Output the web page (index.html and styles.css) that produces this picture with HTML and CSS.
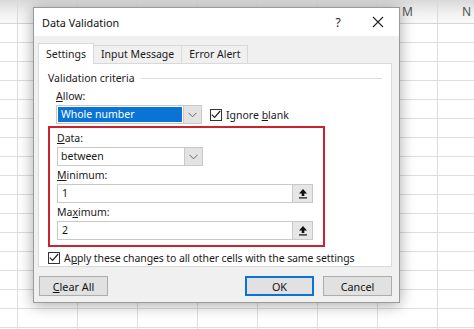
FILE: index.html
```html
<!DOCTYPE html>
<html lang="en">
  <head>
    <meta charset="UTF-8" />
    <meta name="viewport" content="width=device-width, initial-scale=1.0" />
    <title>Data Validation</title>
    <link rel="stylesheet" href="styles.css">
  </head>
  <body>
    <div class="sheet">
      <div class="col-headers">
        <div class="col-head row-head"></div>
        <div class="col-head"></div>
        <div class="col-head"></div>
        <div class="col-head"></div>
        <div class="col-head"></div>
        <div class="col-head"></div>
        <div class="col-head"></div>
        <div class="col-head">M</div>
        <div class="col-head">N</div>
      </div>
      <div class="cells"></div>
    </div>

    <div class="dialog">
      <div class="titlebar">
        <span class="title">Data Validation</span>
        <span class="help">?</span>
        <span class="close">
          <svg width="12" height="12" viewBox="0 0 12 12">
            <path d="M1 1 L11 11 M11 1 L1 11" stroke="#222" stroke-width="1.1" fill="none" />
          </svg>
        </span>
      </div>

      <div class="dialog-body">
        <div class="tabs">
          <div class="tab active">Settings</div>
          <div class="tab">Input Message</div>
          <div class="tab">Error Alert</div>
        </div>

        <div class="panel">
          <div class="group-title">
            <span>Validation criteria</span>
            <span class="group-line"></span>
          </div>

          <div class="field-label allow-label"><u>A</u>llow:</div>
          <div class="allow-row">
            <div class="select">
              <div class="select-value selected">Whole number</div>
              <div class="select-btn">
                <svg width="9" height="6" viewBox="0 0 9 6">
                  <path d="M0.5 0.8 L4.5 4.8 L8.5 0.8" stroke="#666" stroke-width="1" fill="none" />
                </svg>
              </div>
            </div>
            <label class="check">
              <span class="box">
                <svg width="10" height="9" viewBox="0 0 10 9">
                  <path d="M0.8 4.6 L3.6 7.4 L9.2 1" stroke="#222" stroke-width="1.2" fill="none" />
                </svg>
              </span>
              <span class="check-text">Ignore <u>b</u>lank</span>
            </label>
          </div>

          <div class="highlight">
            <div class="field-label"><u>D</u>ata:</div>
            <div class="select">
              <div class="select-value">between</div>
              <div class="select-btn">
                <svg width="9" height="6" viewBox="0 0 9 6">
                  <path d="M0.5 0.8 L4.5 4.8 L8.5 0.8" stroke="#666" stroke-width="1" fill="none" />
                </svg>
              </div>
            </div>

            <div class="field-label"><u>M</u>inimum:</div>
            <div class="input">
              <div class="input-value">1</div>
              <div class="ref-btn">
                <svg width="10" height="11" viewBox="0 0 10 11">
                  <path d="M5 1 L9 5.5 L6.3 5.5 L6.3 8 L3.7 8 L3.7 5.5 L1 5.5 Z" fill="#111" />
                  <rect x="1" y="9.3" width="8" height="1.2" fill="#111" />
                </svg>
              </div>
            </div>

            <div class="field-label">Ma<u>x</u>imum:</div>
            <div class="input">
              <div class="input-value">2</div>
              <div class="ref-btn">
                <svg width="10" height="11" viewBox="0 0 10 11">
                  <path d="M5 1 L9 5.5 L6.3 5.5 L6.3 8 L3.7 8 L3.7 5.5 L1 5.5 Z" fill="#111" />
                  <rect x="1" y="9.3" width="8" height="1.2" fill="#111" />
                </svg>
              </div>
            </div>
          </div>

          <label class="check apply">
            <span class="box">
              <svg width="10" height="9" viewBox="0 0 10 9">
                <path d="M0.8 4.6 L3.6 7.4 L9.2 1" stroke="#222" stroke-width="1.2" fill="none" />
              </svg>
            </span>
            <span class="check-text">A<u>p</u>ply these changes to all other cells with the same settings</span>
          </label>
        </div>

        <div class="buttons">
          <button class="btn"><u>C</u>lear All</button>
          <div class="spacer"></div>
          <button class="btn default">OK</button>
          <button class="btn">Cancel</button>
        </div>
      </div>
    </div>
  </body>
</html>
```

FILE: styles.css
```css
body {
  margin: 0;
  width: 474px;
  height: 329px;
  overflow: hidden;
  position: relative;
  font-family: "Noto Sans", "Open Sans", sans-serif;
  font-size: 10.5px;
  color: #1a1a1a;
  background-color: #fff;
}

.sheet {
  height: 329px;
  display: flex;
  flex-direction: column;
}

.col-headers {
  display: flex;
  height: 24px;
  overflow: hidden;
  border-bottom: 1px solid #d4d4d4;
  background: linear-gradient(#d9d9d9, #f2f2f2 14px, #fafafa);
  box-sizing: border-box;
}

.col-head {
  flex: 0 0 60px;
  border-right: 1px solid #dadada;
  box-sizing: border-box;
  text-align: center;
  line-height: 24px;
  font-size: 12px;
  color: #555;
}

.col-head.row-head {
  flex-basis: 18px;
}

.col-head:last-child {
  flex-basis: 37px;
  text-align: left;
  padding-left: 24px;
  border-right: none;
}

.cells {
  flex: 1;
  background-image:
    linear-gradient(to right, #dedede 1px, transparent 1px),
    linear-gradient(to bottom, #dedede 1px, transparent 1px);
  background-size: 60px 19px;
  background-position: 17px 18px;
}

/* dialog */
.dialog {
  position: absolute;
  left: 33px;
  top: 7px;
  width: 367px;
  height: 296px;
  box-sizing: border-box;
  border: 1px solid #9a9a9a;
  background-color: #f0f0f0;
  box-shadow: 0 2px 14px rgba(0, 0, 0, 0.35);
  display: flex;
  flex-direction: column;
}

.titlebar {
  height: 28px;
  background-color: #fff;
  display: flex;
  align-items: center;
  padding-left: 8px;
}

.title {
  flex: 1;
  font-size: 10.8px;
  color: #111;
}

.help {
  width: 20px;
  text-align: center;
  font-size: 12px;
  margin-right: 20px;
}

.close {
  width: 20px;
  margin-right: 11px;
  display: flex;
  justify-content: center;
}

.dialog-body {
  flex: 1;
  padding: 8px 7px 0 4px;
  display: flex;
  flex-direction: column;
}

.tabs {
  display: flex;
  height: 19px;
  align-items: flex-end;
  padding-left: 1px;
  position: relative;
  z-index: 1;
}

.tab {
  height: 17px;
  line-height: 17px;
  padding: 0 7px;
  border: 1px solid #d9d9d9;
  border-bottom: none;
  background-color: #f0f0f0;
  margin-left: -1px;
}

.tab.active {
  height: 20px;
  line-height: 20px;
  background-color: #fff;
  padding: 0 7px;
  margin-bottom: -1px;
}

.panel {
  height: 204px;
  box-sizing: border-box;
  background-color: #fff;
  border: 1px solid #d9d9d9;
  padding: 5px 9px 0 9px;
}

.group-title {
  display: flex;
  align-items: center;
  height: 18px;
}

.group-line {
  flex: 1;
  height: 1px;
  background-color: #dcdcdc;
  margin-left: 6px;
}

.field-label {
  height: 17px;
  line-height: 17px;
}

.allow-label {
  margin-left: 8px;
  margin-top: 1px;
}

.allow-row {
  display: flex;
  align-items: center;
  margin-left: 8px;
}

.select {
  width: 146px;
  height: 19px;
  box-sizing: border-box;
  border: 1px solid #c9c9c9;
  display: flex;
  background-color: #fff;
}

.select-value {
  flex: 1;
  padding-left: 3px;
  line-height: 17px;
}

.select-value.selected {
  background-color: #0a74d6;
  color: #fff;
  margin: 1px;
  line-height: 15px;
}

.select-btn {
  width: 17px;
  background-color: #e3e3e3;
  border-left: 1px solid #c9c9c9;
  display: flex;
  align-items: center;
  justify-content: center;
}

.check {
  display: flex;
  align-items: center;
  gap: 4px;
}

.check-text {
  white-space: nowrap;
}

.allow-row .check {
  margin-left: 8px;
}

.apply .check-text {
  letter-spacing: -0.1px;
}

.box {
  width: 10px;
  height: 10px;
  border: 1px solid #333;
  background-color: #fff;
  display: flex;
  align-items: center;
  justify-content: center;
}

.highlight {
  margin-top: 2px;
  width: 277px;
  box-sizing: border-box;
  border: 2px solid #c8232e;
  padding: 2px 10px 4px 7px;
}

.highlight .select {
  margin-bottom: 1px;
}

.input {
  height: 19px;
  box-sizing: border-box;
  border: 1px solid #c9c9c9;
  display: flex;
  margin-bottom: 1px;
}

.input-value {
  flex: 1;
  padding-left: 4px;
  line-height: 17px;
}

.ref-btn {
  width: 19px;
  background-color: #e6e6e6;
  border-left: 1px solid #c9c9c9;
  display: flex;
  align-items: center;
  justify-content: center;
}

.apply {
  margin-top: 4px;
  height: 13px;
}

.buttons {
  display: flex;
  margin-top: 9px;
  padding-left: 1px;
}

.spacer {
  flex: 1;
}

.btn {
  width: 69px;
  height: 20px;
  box-sizing: border-box;
  border: 1px solid #adadad;
  background-color: #e1e1e1;
  font-family: inherit;
  font-size: 10.8px;
  color: #111;
  padding: 0;
  margin-left: 9px;
}

.btn:first-child {
  margin-left: 0;
}

.btn.default {
  border: 2px solid #0a74d6;
}
```
